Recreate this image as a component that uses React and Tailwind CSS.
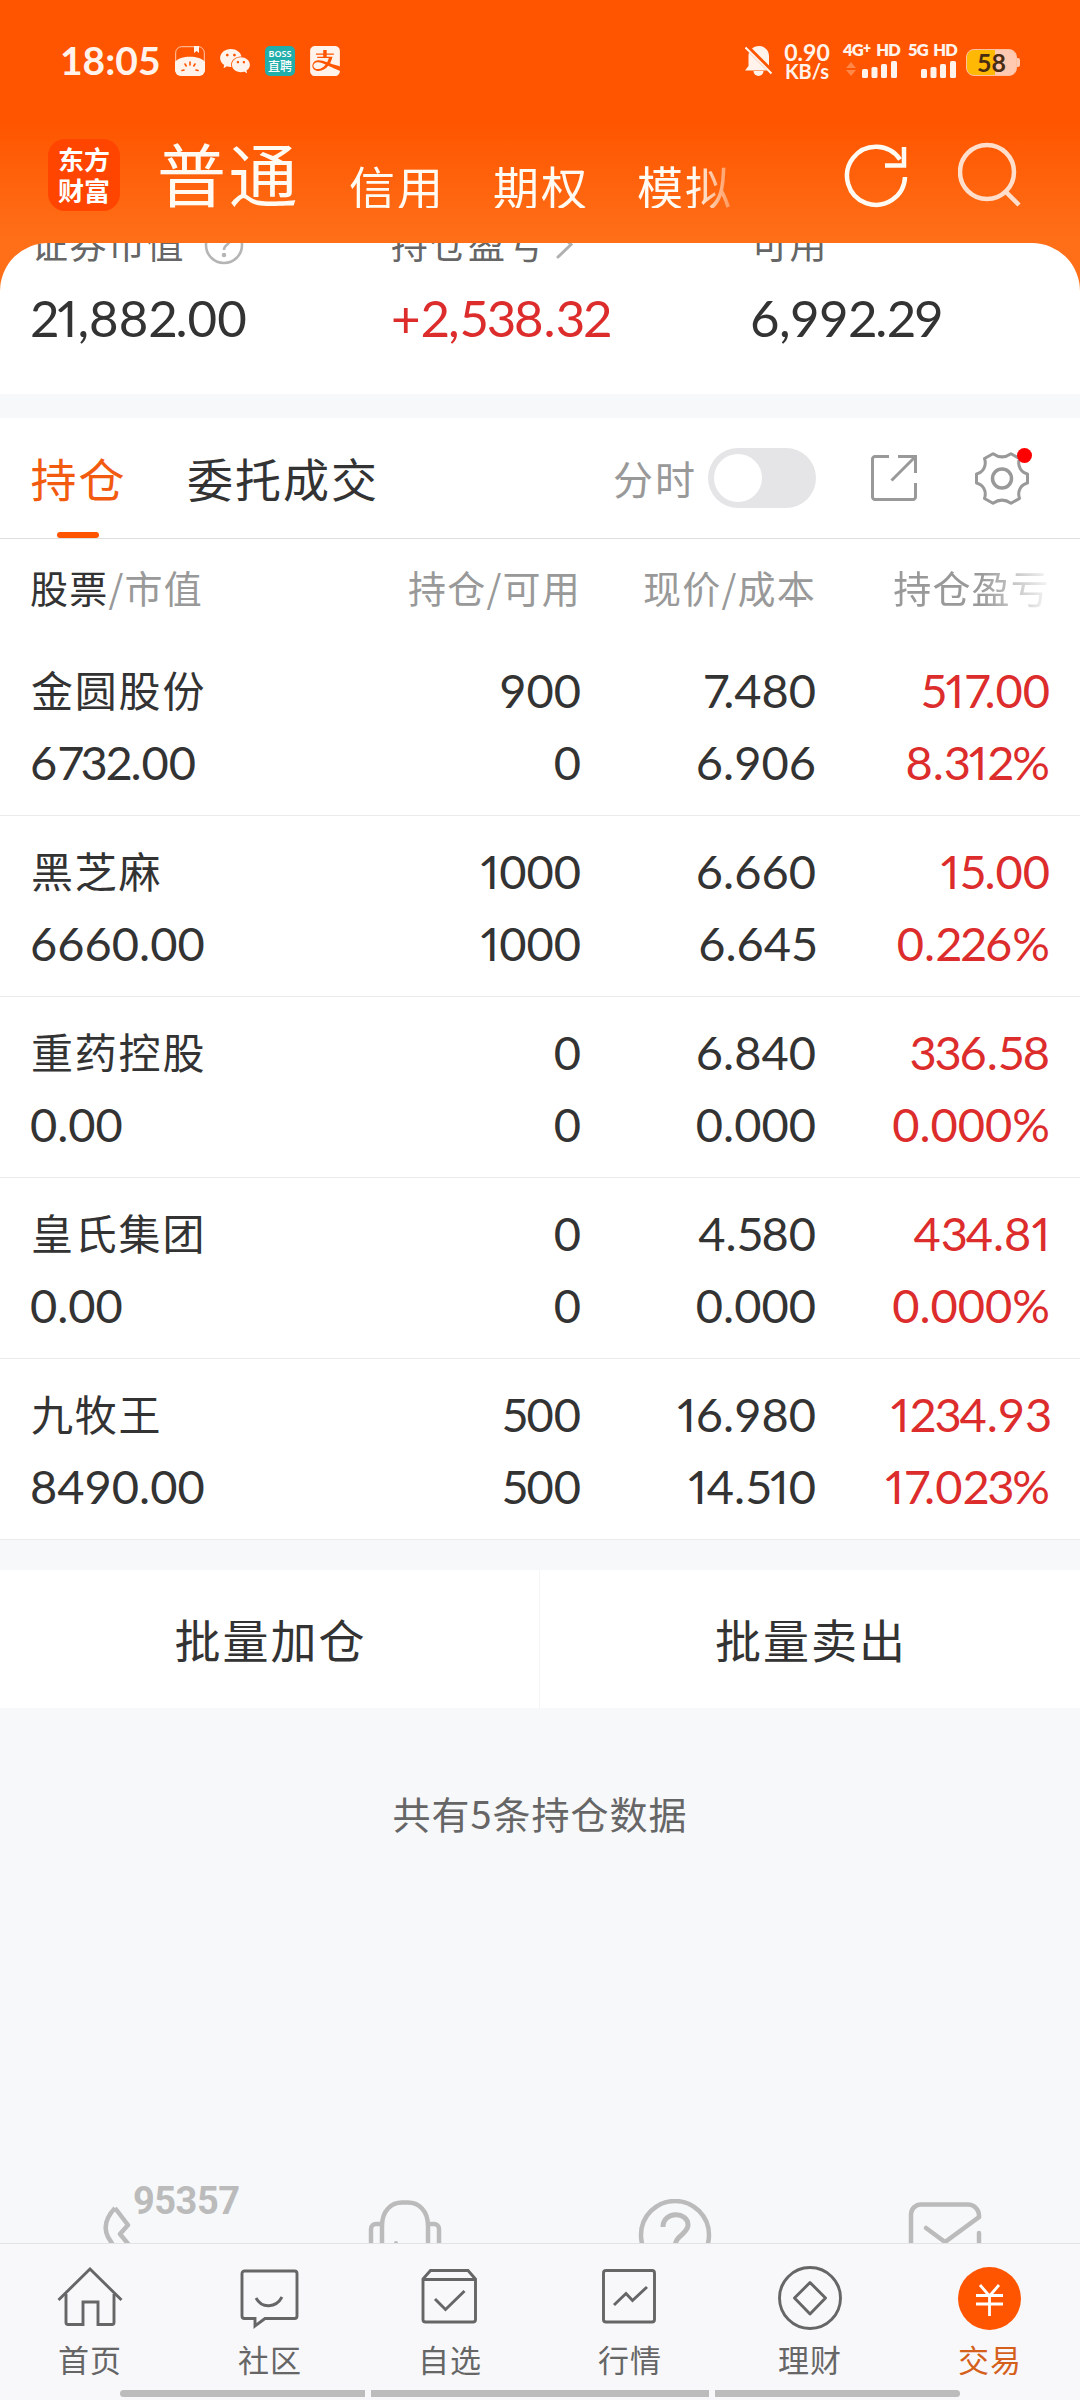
import React from "react";
import { AiFillWechat } from "react-icons/ai";
import { SiAlipay } from "react-icons/si";

const CJK = "font-['Noto_Sans_CJK_SC','Noto_Sans',sans-serif]";
const NUM = "font-['Lato','Noto_Sans_CJK_SC',sans-serif]";

// Tabular round figures, with the slimmer 1, 2, 3, 5 and 7 set tighter.
function digitClass(part, next) {
  if (part === "1") return "proportional-nums";
  if (part === "7") return next && next[0] === "." ? "tabular-nums tracking-[-7px]" : "tabular-nums tracking-[-4px]";
  if (/^[235]+$/.test(part)) return "tabular-nums tracking-[-2.300px]";
  return "tabular-nums";
}

function Digits({ value }) {
  const parts = value.split(/(7|1|[235]+)/).filter(Boolean);
  return parts.map((part, i) => (
    <span key={i} className={digitClass(part, parts[i + 1])}>{part}</span>
  ));
}

function MelonIcon() {
  return (
    <svg width="30" height="30" viewBox="0 0 30 30">
      <rect x="0.7" y="0.7" width="28.6" height="28.6" rx="6" fill="none" stroke="#ffc9ad" strokeWidth="1" />
      <path d="M19 0h5v7l-2.5-2L19 7z" fill="#fff3ec" />
      <path d="M0 16C5 9 25 9 30 16v8a6 6 0 0 1-6 6H6a6 6 0 0 1-6-6z" fill="#fff3ec" />
      <path d="M15 16v3M10 18l1.200 2M20 18l-1.200 2M7 24.500l2-0.500M23 24.500l-2-0.500" stroke="#ff5500" strokeWidth="1.6" strokeLinecap="round" />
    </svg>
  );
}

function BellOffIcon() {
  return (
    <svg width="28" height="32" viewBox="0 0 28 32">
      <path d="M14 1C8 1 3.500 5.500 3.500 11v10L0 25.500h26L24 22V11C24 5.500 20 1 14 1z" fill="#fff3ec" />
      <path d="M8.500 26h10a5 5 0 0 1-10 0z" fill="#fff3ec" />
      <path d="M1.500 1.500l28 28" stroke="#ff5500" strokeWidth="5" />
      <path d="M0.500 2.500l26 26" stroke="#fff3ec" strokeWidth="2" />
    </svg>
  );
}

function Bars() {
  return (
    <svg width="36" height="17" viewBox="0 0 36 17" fill="#fff3ec">
      <rect x="0" y="8" width="6" height="9" rx="1.500" />
      <rect x="9.500" y="6" width="6" height="11" rx="1.500" />
      <rect x="19" y="3" width="6" height="14" rx="1.500" />
      <rect x="29" y="0" width="6" height="17" rx="1.500" />
    </svg>
  );
}

function StatusBar() {
  return (
    <div className="flex h-[122px] items-start pl-[60px] pr-[60px] pt-[42px] text-[#fff3ec]">
      <div className={`${NUM} w-[115px] whitespace-nowrap text-[39px] font-bold leading-[36px]`}>18:05</div>
      <div className="mt-[4px] flex gap-[15px]">
        <MelonIcon />
        <AiFillWechat className="-m-[2px] h-[34px] w-[34px]" />
        <div className={`${CJK} flex h-[30px] w-[30px] flex-col items-center rounded-[5px] bg-[#22aeaa] pt-[3px] text-white`}>
          <span className="font-['Noto_Sans'] text-[9px] font-semibold leading-[10px]">BOSS</span>
          <span className="text-[12px] font-medium leading-[13px]">直聘</span>
        </div>
        <SiAlipay className="h-[30px] w-[30px]" />
      </div>
      <div className="ml-auto flex">
        <div className="mt-[3px]"><BellOffIcon /></div>
        <div className="ml-[9px] w-[50px] text-center font-['Lato'] font-bold">
          <div className="text-[23px] leading-[20px]">0.90</div>
          <div className="text-[20px] leading-[19px]">KB/s</div>
        </div>
        <div className="ml-[11px] w-[60px] font-['Lato'] text-[16.500px] font-extrabold tracking-[-0.800px]">
          <div className="flex h-[19px] justify-between pr-[3px] leading-[17px]"><span>4G<span className="relative -top-[3px] text-[14px]">+</span></span><span>HD</span></div>
          <div className="flex gap-[6px] pl-[3px]">
            <svg width="10" height="16" viewBox="0 0 10 16" fill="#ff8748"><path d="M5 1l5 6H0zM5 15l5-6H0z" /></svg>
            <Bars />
          </div>
        </div>
        <div className="ml-[5px] flex w-[49px] flex-col items-end font-['Lato'] text-[16.500px] font-extrabold tracking-[-0.800px]">
          <div className="flex h-[19px] w-full justify-between leading-[17px]"><span>5G</span><span>HD</span></div>
          <Bars />
        </div>
        <div className="ml-[9px] mt-[7px] flex h-[27px] items-center">
          <div className="flex h-[27px] w-[51px] items-center justify-center rounded-[8px] border border-[#ffc0a0] bg-[linear-gradient(90deg,#ffb904_0_58%,#ffc8b0_58%)] pb-[1px] font-['Lato'] text-[25px] font-bold leading-none text-[#4a2c12]">58</div>
          <div className="h-[9px] w-[3px] rounded-r-[2px] bg-[#ffc8b0]" />
        </div>
      </div>
    </div>
  );
}

function AppHeader() {
  return (
    <div className={`${CJK} flex h-[121px] items-start pl-[48px] text-[#fffaf2]`}>
      <div className="mt-[17px] flex h-[72px] w-[72px] flex-col items-center justify-center rounded-[17px] bg-[#ff4500] pb-[3px] text-[26px] font-bold leading-[31px] text-white">
        <span>东方</span>
        <span>财富</span>
      </div>
      <div className="ml-[37px] mt-[15px] w-[192px] whitespace-nowrap text-[69px] leading-[70px] tracking-[2.500px]">普通</div>
      <div className="mt-[40px] flex w-[400px] gap-[48px] whitespace-nowrap text-[46px] leading-[46px] tracking-[2px] [mask-image:linear-gradient(90deg,#000_345px,transparent_400px)]">
        <span>信用</span>
        <span>期权</span>
        <span>模拟</span>
      </div>
      <svg className="ml-[95px] mt-[20px]" width="64" height="68" viewBox="0 0 64 68" fill="none" stroke="#fffaf2" strokeWidth="4.500">
        <path d="M56 17.500A29 29 0 1 0 61 35" />
        <path d="M60 5v18.500H41" />
      </svg>
      <svg className="ml-[50px] mt-[19px]" width="66" height="68" viewBox="0 0 66 68" fill="none" stroke="#ffdfcc" strokeWidth="4.500">
        <circle cx="29" cy="31" r="27" />
        <path d="M47 50l14 14" />
      </svg>
    </div>
  );
}

function Summary() {
  const label = `${CJK} flex h-[40px] items-start whitespace-nowrap text-[37px] leading-[40px] tracking-[1.500px] text-[#666]`;
  const value = `${NUM} mt-[24px] h-[60px] text-[51px] leading-[62px]`;
  return (
    <div className="h-[151px] overflow-hidden rounded-t-[48px] bg-white">
      <div className="-mt-[20px] flex pl-[31px]">
        <div className="w-[360px]">
          <div className={label}>
            证券市值
            <svg className="ml-[19px] mt-[2px]" width="40" height="40" viewBox="0 0 40 40" fill="none" stroke="#b5b5b5" strokeWidth="2.600">
              <circle cx="20" cy="20" r="18" />
              <path d="M14 15c0-8 12-8 12 0 0 5-6 4-6 10" />
              <circle cx="20" cy="30" r="1" fill="#b5b5b5" />
            </svg>
          </div>
          <div className={`${value} -ml-[1px] text-[#333]`}><Digits value="21,882.00" /></div>
        </div>
        <div className="w-[360px]">
          <div className={label}>
            持仓盈亏
            <svg className="ml-[10px] mt-[5px]" width="20" height="32" viewBox="0 0 20 32" fill="none" stroke="#b0b0b0" strokeWidth="3" strokeLinecap="round">
              <path d="M3 4l13 12.500L3 29" />
            </svg>
          </div>
          <div className={`${value} text-[#dc2c2c]`}><Digits value="+2,538.32" /></div>
        </div>
        <div>
          <div className={label}>可用</div>
          <div className={`${value} -ml-[1px] tracking-[-0.600px] text-[#333]`}><Digits value="6,992.29" /></div>
        </div>
      </div>
    </div>
  );
}

function Toolbar() {
  return (
    <div className={`${CJK} flex h-[121px] border-b border-[#dedede] bg-white text-[46px] leading-[118px] tracking-[2px] text-[#333]`}>
      <div className="ml-[31px] flex h-[120px] w-[95px] flex-col items-center text-[#f25a10]">
        <div className="h-[114px] whitespace-nowrap">持仓</div>
        <div className="-ml-[2px] h-[6px] w-[42px] rounded-[3px] bg-[#ff5500]" />
      </div>
      <div className="ml-[61px]">委托成交</div>
      <div className="ml-auto flex h-[120px] items-center">
        <span className="text-[40px] tracking-[2px] text-[#999]">分时</span>
        <div className="ml-[11px] flex h-[60px] w-[108px] items-center rounded-full bg-[#e5e5e7] pl-[6px]">
          <div className="h-[48px] w-[48px] rounded-full bg-white" />
        </div>
        <svg className="ml-[55px]" width="46" height="46" viewBox="0 0 46 46" fill="none" stroke="#999" strokeWidth="3">
          <path d="M18 1.500H4A2.500 2.500 0 0 0 1.500 4v38A2.500 2.500 0 0 0 4 44.500h38a2.500 2.500 0 0 0 2.500-2.500V28" />
          <path d="M27 1.500h17.500V18M44 2L20.500 25.500" />
        </svg>
        <div className="relative ml-[58px] mr-[51px] h-[53px] w-[54px]">
          <svg width="54" height="53" viewBox="0 0 54 53" fill="none" stroke="#999" strokeWidth="3" strokeLinejoin="round">
            <circle cx="27" cy="26.500" r="9.500" strokeWidth="3.500" />
            <path d="M18 1.700Q27 8 36 1.700L44.500 6.500C42 14 46 20.500 52.500 22V31C46 32.500 42 39 44.500 46.500L36 51.300Q27 45 18 51.300L9.500 46.500C12 39 8 32.500 1.500 31V22C8 20.500 12 14 9.500 6.500Z" />
          </svg>
          <div className="absolute right-[-3px] top-[-4px] h-[15px] w-[15px] rounded-full bg-[#ff0000]" />
        </div>
      </div>
    </div>
  );
}

const GRID = "grid grid-cols-[281px_270px_235px_234px] pl-[30px]";

const HOLDINGS = [
  ["金圆股份", "6732.00", "900", "0", "7.480", "6.906", "517.00", "8.312%"],
  ["黑芝麻", "6660.00", "1000", "1000", "6.660", "6.645", "15.00", "0.226%"],
  ["重药控股", "0.00", "0", "0", "6.840", "0.000", "336.58", "0.000%"],
  ["皇氏集团", "0.00", "0", "0", "4.580", "0.000", "434.81", "0.000%"],
  ["九牧王", "8490.00", "500", "500", "16.980", "14.510", "1234.93", "17.023%"],
];

function Holdings() {
  return (
    <div className="bg-white">
      <div className={`${CJK} ${GRID} h-[96px] whitespace-nowrap text-[38px] leading-[95px] tracking-[1.200px] text-[#999]`}>
        <div><span className="text-[#333]">股票</span>/市值</div>
        <div className="text-right">持仓/可用</div>
        <div className="text-right">现价/成本</div>
        <div className="text-right [mask-image:linear-gradient(90deg,#000_165px,transparent_240px)]">持仓盈亏</div>
      </div>
      {HOLDINGS.map((h) => (
        <div key={h[0]} className={`${NUM} ${GRID} h-[181px] border-b border-[#ebebeb] pt-[19px] text-[47px] leading-[72px] text-[#333]`}>
          <div>
            <div className={`${CJK} ml-[1px] h-[72px] text-[42px] leading-[69px] tracking-[1.800px]`}>{h[0]}</div>
            <div><Digits value={h[1]} /></div>
          </div>
          <div className="text-right"><div><Digits value={h[2]} /></div><div><Digits value={h[3]} /></div></div>
          <div className="text-right"><div><Digits value={h[4]} /></div><div><Digits value={h[5]} /></div></div>
          <div className="text-right text-[#dc2c2c]"><div><Digits value={h[6]} /></div><div><Digits value={h[7]} /></div></div>
        </div>
      ))}
    </div>
  );
}

function ContactStrip() {
  return (
    <div className="mt-auto grid h-[64px] grid-cols-4 overflow-hidden">
      <div className="flex pl-[101px]">
        <svg className="mt-[24px]" width="32" height="60" viewBox="0 0 32 60" fill="none" stroke="#bbb" strokeWidth="4.500" strokeLinejoin="round">
          <path d="M14 5L27 22 19 31 33 48M14 5Q0 20 7 34L17 50" />
        </svg>
        <div className="h-[40px] font-['Roboto','Lato'] text-[38px] font-bold leading-[45px] tracking-[-0.500px] text-[#bbb]">95357</div>
      </div>
      <svg className="mx-auto mt-[21px]" width="74" height="60" viewBox="0 0 74 60" fill="none" stroke="#bbb" strokeWidth="4.500">
        <path d="M14 60V26C14 10 24 2.500 34 2.500H40C50 2.500 60 10 60 26V60M14 24H8a5 5 0 0 0-5 5V60M60 24h6a5 5 0 0 1 5 5V60" />
        <circle cx="28" cy="43" r="2" fill="#bbb" stroke="none" />
      </svg>
      <svg className="mx-auto mt-[20px]" width="74" height="74" viewBox="0 0 74 74" fill="none" stroke="#bbb" strokeWidth="4.500">
        <circle cx="37" cy="36" r="34" />
        <path d="M25 28C25 12 50 12 50 26C50 35 37 36 37 48" strokeWidth="5" />
      </svg>
      <svg className="mx-auto mt-[23px]" width="74" height="60" viewBox="0 0 74 60" fill="none" stroke="#bbb" strokeWidth="4.500" strokeLinecap="round">
        <path d="M3 60V12A10 10 0 0 1 13 2.500H60A11 11 0 0 1 71 13V15L37 40 18 26M71 31V60" />
      </svg>
    </div>
  );
}

const NAV = [
  ["首页", <g key="g"><path d="M1.500 34L33 3l31.500 31" /><path d="M9 28v28.500a2 2 0 0 0 2 2H26V36H41V58.500H55a2 2 0 0 0 2-2V28" /></g>],
  ["社区", <path key="g" d="M7 5H57.500a2.500 2.500 0 0 1 2.500 2.500V50a2.500 2.500 0 0 1-2.500 2.500H28L18 60V52.500H7.500A2.500 2.500 0 0 1 5 50V7.500A2.500 2.500 0 0 1 7.500 5M19 32C25 43 39 42 45 31" />],
  ["自选", <g key="g"><path d="M6 13L13.500 4.500H51L58.500 13V53.500a2.500 2.500 0 0 1-2.500 2.500H8.500A2.500 2.500 0 0 1 6 53.500zM6 13.500H58.500" /><path d="M18 33L28.500 43.500 47.500 25" /></g>],
  ["行情", <g key="g"><rect x="6.500" y="4.500" width="51" height="51.500" rx="2.500" /><path d="M17 39L29 27.500 35.500 34.500 50 21" /></g>],
  ["理财", <g key="g"><circle cx="33" cy="32" r="30.500" /><path d="M33 16.500L48.500 32 33 48 17.500 32z" strokeLinejoin="round" /></g>],
];

function BottomNav() {
  return (
    <div className={`${CJK} h-[157px] border-t border-[#e3e3e5] bg-[#f8f8fb]`}>
      <div className="grid h-[146px] grid-cols-6 pt-[22px] text-[31px] leading-[38px] tracking-[1px] text-[#666]">
        {NAV.map(([name, icon]) => (
          <div key={name} className="flex flex-col items-center">
            <svg width="66" height="66" viewBox="0 0 66 66" fill="none" stroke="#666" strokeWidth="2.900">{icon}</svg>
            <span className="mt-[8px]">{name}</span>
          </div>
        ))}
        <div className="flex flex-col items-center text-[#d4601c]">
          <svg width="66" height="66" viewBox="0 0 66 66" fill="none" stroke="#fff" strokeWidth="2.800">
            <circle cx="32.500" cy="32.500" r="31.500" fill="#ff5500" stroke="none" />
            <path d="M23 19L32.500 30 42 19M32.500 29V50M19 29.500H46M19 38H46" />
          </svg>
          <span className="mt-[8px]">交易</span>
        </div>
      </div>
      <div className="flex justify-center gap-[6px]">
        <div className="h-[7px] w-[245px] rounded-l-full bg-[#bcbcbc]" />
        <div className="h-[7px] w-[338px] bg-[#bcbcbc]" />
        <div className="h-[7px] w-[245px] rounded-r-full bg-[#bcbcbc]" />
      </div>
    </div>
  );
}

export default function App() {
  return (
    <div className="flex h-[2400px] w-[1080px] flex-col overflow-hidden bg-[#f7f8fa]">
      <div className="bg-[linear-gradient(180deg,#ff5500_0,#ff5500_122px,#ff6f18_240px)]">
        <StatusBar />
        <AppHeader />
        <Summary />
      </div>
      <div className="h-[24px]" />
      <Toolbar />
      <Holdings />
      <div className={`${CJK} mt-[30px] grid h-[138px] grid-cols-2 bg-white text-center text-[46px] leading-[136px] tracking-[2px] text-[#333]`}>
        <div className="border-r border-[#f5f5f5] pl-[2px]">批量加仓</div>
        <div className="pl-[2px]">批量卖出</div>
      </div>
      <div className={`${CJK} mt-[84px] text-center text-[38px] leading-[42px] tracking-[1px] text-[#666]`}>共有5条持仓数据</div>
      <ContactStrip />
      <BottomNav />
    </div>
  );
}
